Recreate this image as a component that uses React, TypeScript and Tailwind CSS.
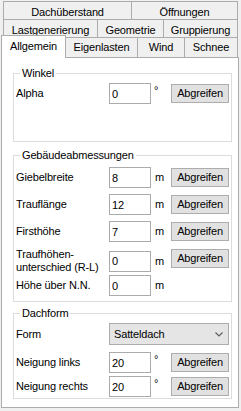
import { ReactNode } from "react"

const tabRows: { label: string; w: string }[][] = [
  [
    { label: "Dachüberstand", w: "w-[129px]" },
    { label: "Öffnungen", w: "w-[107px]" },
  ],
  [
    { label: "Lastgenerierung", w: "w-[95px]" },
    { label: "Geometrie", w: "w-[67px]" },
    { label: "Gruppierung", w: "w-[75px]" },
  ],
]

function Tab({ label, w, first }: { label: string; w: string; first?: boolean }) {
  return (
    <div
      className={`${w} ${first ? "" : "-ml-px"} h-[18px] border-t border-l border-r border-[#acacac] bg-[#f0f0f0] pt-[4px] text-center leading-[13px] whitespace-nowrap`}
    >
      {label}
    </div>
  )
}

function Group({ title, className, children }: { title: string; className: string; children: ReactNode }) {
  return (
    <fieldset className={`ml-[10px] w-[219px] border border-[#dcdcdc] ${className}`}>
      <legend className="ml-[6px] px-[2px] leading-[13px]">{title}</legend>
      {children}
    </fieldset>
  )
}

function Row({ label, value, unit, button = true }: { label: ReactNode; value: string; unit: string; button?: boolean }) {
  return (
    <div className="ml-[2px] grid h-[21px] grid-cols-[93px_42px_20px_58px] items-center">
      <div className="leading-[13px] whitespace-nowrap">{label}</div>
      <input
        readOnly
        defaultValue={value}
        className="h-[21px] w-[42px] border border-[#ababab] bg-white pl-[2px] leading-[13px] outline-none"
      />
      <div className={`leading-[13px] ${unit === "°" ? "-mt-[6px] pl-[3px]" : "pl-[4px]"}`}>{unit}</div>
      {button ? (
        <button className="mt-px h-[19px] w-[58px] self-start border border-[#adadad] bg-[#e1e1e1] text-center leading-[13px]">
          Abgreifen
        </button>
      ) : (
        <div />
      )}
    </div>
  )
}

export default function App() {
  return (
    <div className="h-[411px] w-[241px] overflow-hidden bg-[#f0f0f0] pt-px font-['Liberation_Sans',Arial,sans-serif] text-[11px] tracking-[-0.15px] text-[#000]">
      {/* upper tab rows */}
      {tabRows.map((row, i) => (
        <div key={i} className="ml-[3px] flex">
          {row.map((t, j) => (
            <Tab key={t.label} label={t.label} w={t.w} first={j === 0} />
          ))}
        </div>
      ))}

      {/* front tab row */}
      <div className="relative z-10 flex h-[20px] items-start">
        <div className="-mt-[2px] ml-px h-[23px] w-[65px] border-t border-l border-r border-[#acacac] bg-white pt-[4px] text-center leading-[13px]">
          Allgemein
        </div>
        <div className="-ml-px h-[20px] w-[73px] border-t border-l border-r border-[#acacac] bg-[#f0f0f0] pt-[3px] text-center leading-[13px]">
          Eigenlasten
        </div>
        <div className="-ml-px h-[20px] w-[48px] border-t border-l border-r border-[#acacac] bg-[#f0f0f0] pt-[3px] text-center leading-[13px]">
          Wind
        </div>
        <div className="-ml-px h-[20px] w-[54px] border-t border-l border-r border-[#acacac] bg-[#f0f0f0] pt-[3px] text-center leading-[13px]">
          Schnee
        </div>
      </div>

      {/* tab page */}
      <div className="ml-px flex h-[351px] w-[238px] flex-col border border-[#acacac] bg-white pl-px">
        <Group title="Winkel" className="mt-[9px] h-[75px]">
          <div className="mt-[3px]">
            <Row label="Alpha" value="0" unit="°" />
          </div>
        </Group>

        <Group title="Gebäudeabmessungen" className="mt-[7px] h-[153px]">
          <div className="mt-[5px] flex flex-col gap-[6px]">
            <Row label="Giebelbreite" value="8" unit="m" />
            <Row label="Trauflänge" value="12" unit="m" />
            <Row label="Firsthöhe" value="7" unit="m" />
            <Row
              label={
                <>
                  Traufhöhen-
                  <br />
                  unterschied (R-L)
                </>
              }
              value="0"
              unit="m"
            />
            <Row label="Höhe über N.N." value="0" unit="m" button={false} />
          </div>
        </Group>

        <Group title="Dachform" className="mt-[5px] h-[92px]">
          <div className="mt-[3px] ml-[2px] grid h-[22px] grid-cols-[93px_120px] items-center">
            <div className="leading-[13px]">Form</div>
            <div className="flex h-[22px] items-center justify-between border border-[#acacac] bg-[#e5e5e5] pl-[4px] pr-[5px] leading-[13px]">
              <span>Satteldach</span>
              <svg width="8" height="5" viewBox="0 0 8 5" fill="none">
                <path d="M0.5 0.5 L4 4 L7.5 0.5" stroke="#606060" strokeWidth="1.2" />
              </svg>
            </div>
          </div>
          <div className="mt-[7px] flex flex-col gap-[3px]">
            <Row label="Neigung links" value="20" unit="°" />
            <Row label="Neigung rechts" value="20" unit="°" />
          </div>
        </Group>
      </div>
    </div>
  )
}
